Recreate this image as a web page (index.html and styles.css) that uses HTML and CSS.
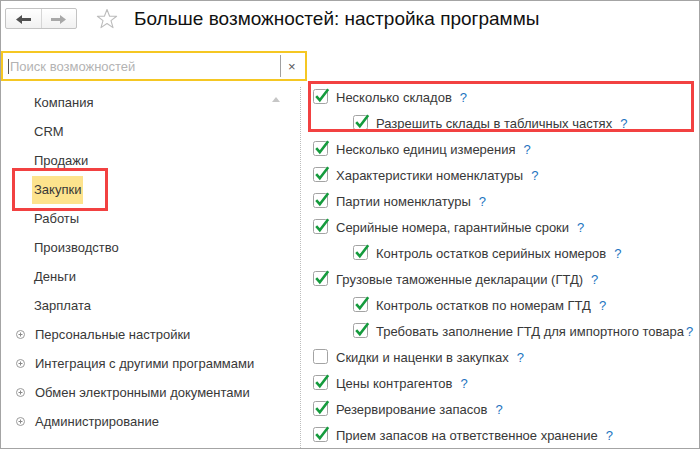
FILE: index.html
```html
<!DOCTYPE html>
<html lang="ru">
<head>
<meta charset="utf-8">
<title>Больше возможностей</title>
<link rel="stylesheet" href="styles.css">
</head>
<body>
<div class="window">
  <div class="header">
    <div class="nav">
      <div class="nav-btn">
        <svg width="15" height="9" viewBox="0 0 15 9"><path d="M0 4.5 L6 0 L6 3 L15 3 L15 6 L6 6 L6 9 Z" fill="#505050"/></svg>
      </div>
      <div class="nav-btn nav-btn-2">
        <svg width="15" height="9" viewBox="0 0 15 9"><path d="M15 4.5 L9 0 L9 3 L0 3 L0 6 L9 6 L9 9 Z" fill="#a8a8a8"/></svg>
      </div>
    </div>
    <svg class="star" width="22" height="22" viewBox="0 0 22 22"><path d="M11 1.5 L13.6 8.2 L20.6 8.3 L15 12.6 L17 19.6 L11 15.5 L5 19.6 L7 12.6 L1.4 8.3 L8.4 8.2 Z" fill="none" stroke="#bcbcbc" stroke-width="1.1" stroke-linejoin="round"/></svg>
    <div class="title">Больше возможностей: настройка программы</div>
  </div>

  <div class="search">
    <span class="caret"></span>
    <span class="placeholder">Поиск возможностей</span>
    <span class="search-sep"></span>
    <span class="search-clear">×</span>
  </div>

  <div class="main">
    <div class="left">
      <div class="scroll-up"></div>
      <div class="sec">Компания</div>
      <div class="sec">CRM</div>
      <div class="sec">Продажи</div>
      <div class="sec"><span class="hl">Закупки</span></div>
      <div class="sec">Работы</div>
      <div class="sec">Производство</div>
      <div class="sec">Деньги</div>
      <div class="sec">Зарплата</div>
      <div class="sec grp"><svg class="exp" width="9" height="9" viewBox="0 0 9 9"><circle cx="4.5" cy="4.5" r="4" fill="none" stroke="#9a9a9a"/><path d="M2.5 4.5 H6.5 M4.5 2.5 V6.5" stroke="#8a8a8a"/></svg>Персональные настройки</div>
      <div class="sec grp"><svg class="exp" width="9" height="9" viewBox="0 0 9 9"><circle cx="4.5" cy="4.5" r="4" fill="none" stroke="#9a9a9a"/><path d="M2.5 4.5 H6.5 M4.5 2.5 V6.5" stroke="#8a8a8a"/></svg>Интеграция с другими программами</div>
      <div class="sec grp"><svg class="exp" width="9" height="9" viewBox="0 0 9 9"><circle cx="4.5" cy="4.5" r="4" fill="none" stroke="#9a9a9a"/><path d="M2.5 4.5 H6.5 M4.5 2.5 V6.5" stroke="#8a8a8a"/></svg>Обмен электронными документами</div>
      <div class="sec grp"><svg class="exp" width="9" height="9" viewBox="0 0 9 9"><circle cx="4.5" cy="4.5" r="4" fill="none" stroke="#9a9a9a"/><path d="M2.5 4.5 H6.5 M4.5 2.5 V6.5" stroke="#8a8a8a"/></svg>Администрирование</div>
    </div>

    <div class="right">
      <div class="opt"><svg class="cb" width="17" height="17" viewBox="0 0 17 17"><rect x="0.5" y="1.5" width="14" height="14" rx="2" fill="#fff" stroke="#a3a3a3"/><path d="M3.2 8.2 L6.8 12.2 L15.2 1.2" fill="none" stroke="#159b3d" stroke-width="2.6"/></svg>Несколько складов<span class="q">?</span></div>
      <div class="opt sub"><svg class="cb" width="17" height="17" viewBox="0 0 17 17"><rect x="0.5" y="1.5" width="14" height="14" rx="2" fill="#fff" stroke="#a3a3a3"/><path d="M3.2 8.2 L6.8 12.2 L15.2 1.2" fill="none" stroke="#159b3d" stroke-width="2.6"/></svg>Разрешить склады в табличных частях<span class="q">?</span></div>
      <div class="opt"><svg class="cb" width="17" height="17" viewBox="0 0 17 17"><rect x="0.5" y="1.5" width="14" height="14" rx="2" fill="#fff" stroke="#a3a3a3"/><path d="M3.2 8.2 L6.8 12.2 L15.2 1.2" fill="none" stroke="#159b3d" stroke-width="2.6"/></svg>Несколько единиц измерения<span class="q">?</span></div>
      <div class="opt"><svg class="cb" width="17" height="17" viewBox="0 0 17 17"><rect x="0.5" y="1.5" width="14" height="14" rx="2" fill="#fff" stroke="#a3a3a3"/><path d="M3.2 8.2 L6.8 12.2 L15.2 1.2" fill="none" stroke="#159b3d" stroke-width="2.6"/></svg>Характеристики номенклатуры<span class="q">?</span></div>
      <div class="opt"><svg class="cb" width="17" height="17" viewBox="0 0 17 17"><rect x="0.5" y="1.5" width="14" height="14" rx="2" fill="#fff" stroke="#a3a3a3"/><path d="M3.2 8.2 L6.8 12.2 L15.2 1.2" fill="none" stroke="#159b3d" stroke-width="2.6"/></svg>Партии номенклатуры<span class="q">?</span></div>
      <div class="opt"><svg class="cb" width="17" height="17" viewBox="0 0 17 17"><rect x="0.5" y="1.5" width="14" height="14" rx="2" fill="#fff" stroke="#a3a3a3"/><path d="M3.2 8.2 L6.8 12.2 L15.2 1.2" fill="none" stroke="#159b3d" stroke-width="2.6"/></svg>Серийные номера, гарантийные сроки<span class="q">?</span></div>
      <div class="opt sub"><svg class="cb" width="17" height="17" viewBox="0 0 17 17"><rect x="0.5" y="1.5" width="14" height="14" rx="2" fill="#fff" stroke="#a3a3a3"/><path d="M3.2 8.2 L6.8 12.2 L15.2 1.2" fill="none" stroke="#159b3d" stroke-width="2.6"/></svg>Контроль остатков серийных номеров<span class="q">?</span></div>
      <div class="opt"><svg class="cb" width="17" height="17" viewBox="0 0 17 17"><rect x="0.5" y="1.5" width="14" height="14" rx="2" fill="#fff" stroke="#a3a3a3"/><path d="M3.2 8.2 L6.8 12.2 L15.2 1.2" fill="none" stroke="#159b3d" stroke-width="2.6"/></svg>Грузовые таможенные декларации (ГТД)<span class="q">?</span></div>
      <div class="opt sub"><svg class="cb" width="17" height="17" viewBox="0 0 17 17"><rect x="0.5" y="1.5" width="14" height="14" rx="2" fill="#fff" stroke="#a3a3a3"/><path d="M3.2 8.2 L6.8 12.2 L15.2 1.2" fill="none" stroke="#159b3d" stroke-width="2.6"/></svg>Контроль остатков по номерам ГТД<span class="q">?</span></div>
      <div class="opt sub"><svg class="cb" width="17" height="17" viewBox="0 0 17 17"><rect x="0.5" y="1.5" width="14" height="14" rx="2" fill="#fff" stroke="#a3a3a3"/><path d="M3.2 8.2 L6.8 12.2 L15.2 1.2" fill="none" stroke="#159b3d" stroke-width="2.6"/></svg>Требовать заполнение ГТД для импортного товара<span class="q q-tight">?</span></div>
      <div class="opt"><svg class="cb" width="17" height="17" viewBox="0 0 17 17"><rect x="0.5" y="1.5" width="14" height="14" rx="2" fill="#fff" stroke="#a3a3a3"/></svg>Скидки и наценки в закупках<span class="q">?</span></div>
      <div class="opt"><svg class="cb" width="17" height="17" viewBox="0 0 17 17"><rect x="0.5" y="1.5" width="14" height="14" rx="2" fill="#fff" stroke="#a3a3a3"/><path d="M3.2 8.2 L6.8 12.2 L15.2 1.2" fill="none" stroke="#159b3d" stroke-width="2.6"/></svg>Цены контрагентов<span class="q">?</span></div>
      <div class="opt"><svg class="cb" width="17" height="17" viewBox="0 0 17 17"><rect x="0.5" y="1.5" width="14" height="14" rx="2" fill="#fff" stroke="#a3a3a3"/><path d="M3.2 8.2 L6.8 12.2 L15.2 1.2" fill="none" stroke="#159b3d" stroke-width="2.6"/></svg>Резервирование запасов<span class="q">?</span></div>
      <div class="opt"><svg class="cb" width="17" height="17" viewBox="0 0 17 17"><rect x="0.5" y="1.5" width="14" height="14" rx="2" fill="#fff" stroke="#a3a3a3"/><path d="M3.2 8.2 L6.8 12.2 L15.2 1.2" fill="none" stroke="#159b3d" stroke-width="2.6"/></svg>Прием запасов на ответственное хранение<span class="q">?</span></div>
    </div>

    <div class="mark mark-left"></div>
    <div class="mark mark-right"></div>
  </div>
</div>
</body>
</html>
```

FILE: styles.css
```css
html, body {
  margin: 0;
  padding: 0;
  background: #fff;
}

body {
  font-family: "Liberation Sans", Arial, sans-serif;
  font-size: 13px;
  color: #333;
}

.window {
  width: 700px;
  height: 449px;
  box-sizing: border-box;
  border: 1px solid #a4a4a4;
  overflow: hidden;
  display: flex;
  flex-direction: column;
}

/* header */
.header {
  height: 50px;
  box-sizing: border-box;
  padding: 7px 0 0 4px;
  display: flex;
  align-items: flex-start;
}

.nav {
  width: 72px;
  height: 21px;
  box-sizing: border-box;
  border: 1px solid #c3c3c3;
  border-radius: 2px;
  background: linear-gradient(#ffffff, #f1f1f1);
  display: flex;
}

.nav-btn {
  flex: 1;
  display: flex;
  align-items: center;
  justify-content: center;
}

.nav-btn-2 {
  border-left: 1px solid #d6d6d6;
}

.nav-btn svg {
  display: block;
  margin-top: 1px;
}

.star {
  display: block;
  margin: 0 0 0 19px;
  flex: none;
}

.title {
  margin-left: 16px;
  font-size: 19px;
  line-height: 21px;
  color: #111;
  white-space: nowrap;
}

/* search */
.search {
  width: 306px;
  height: 30px;
  box-sizing: border-box;
  border: 2px solid #f5c723;
  display: flex;
  align-items: center;
  position: relative;
  flex: none;
}

.caret {
  width: 1px;
  height: 15px;
  background: #555;
  margin-left: 5px;
}

.placeholder {
  margin-left: 1px;
  color: #b3b3b3;
  flex: 1;
  white-space: nowrap;
}

.search-sep {
  width: 1px;
  height: 22px;
  background: #a0a0a0;
  margin-right: 7px;
}

.search-clear {
  width: 8px;
  margin-right: 9px;
  color: #555;
  font-size: 13px;
  line-height: 13px;
}

/* main */
.main {
  flex: 1;
  display: flex;
  position: relative;
}

.left {
  width: 300px;
  box-sizing: border-box;
  border-right: 1px dotted #bdbdbd;
  margin-top: 6px;
  padding-top: 1px;
  position: relative;
  flex: none;
}

.scroll-up {
  position: absolute;
  left: 271px;
  top: 10px;
  width: 0;
  height: 0;
  border-left: 4px solid transparent;
  border-right: 4px solid transparent;
  border-bottom: 5px solid #c6c6c6;
}

.sec {
  height: 29px;
  line-height: 29px;
  padding-left: 33px;
  color: #383838;
  white-space: nowrap;
  display: flex;
  align-items: center;
}

.sec.grp {
  padding-left: 15px;
}

.exp {
  display: block;
  margin-right: 10px;
  flex: none;
}

.hl {
  background: #fde38d;
  margin-left: -2px;
  padding: 0 2px;
  line-height: 28px;
}

.right {
  flex: 1;
  padding: 3px 0 0 12px;
}

.opt {
  height: 26px;
  display: flex;
  align-items: center;
  white-space: nowrap;
  color: #383838;
}

.opt.sub {
  padding-left: 40px;
}

.cb {
  display: block;
  flex: none;
  margin-right: 6px;
  margin-top: -2px;
}

.q {
  color: #2374c0;
  margin-left: 8px;
}

.q.q-tight {
  margin-left: 2px;
}

/* annotation frames */
.mark {
  position: absolute;
  box-sizing: border-box;
  border: 3px solid #f24141;
}

.mark-left {
  left: 11px;
  top: 87px;
  width: 96px;
  height: 43px;
}

.mark-right {
  left: 307px;
  top: 0;
  width: 386px;
  height: 51px;
}
```
